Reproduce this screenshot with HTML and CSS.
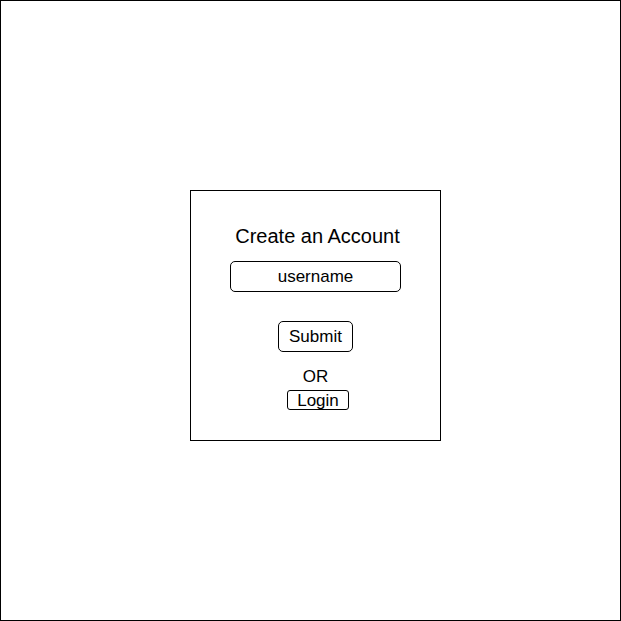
FILE: index.html
```html
<!DOCTYPE html>
<html>
<head>
<meta charset="utf-8">
<link rel="stylesheet" href="styles.css">
</head>
<body>
<div class="frame">
  <div class="card">
    <h1 class="title">Create an Account</h1>
    <div class="input">username</div>
    <button class="btn submit">Submit</button>
    <div class="or">OR</div>
    <button class="btn login">Login</button>
  </div>
</div>
</body>
</html>
```
FILE: styles.css
```css
html, body {
  margin: 0;
  padding: 0;
  background: #fff;
}
body {
  font-family: "Liberation Sans", Arial, sans-serif;
  color: #000;
}
.frame {
  width: 621px;
  height: 621px;
  box-sizing: border-box;
  border: 1px solid #000;
  padding: 189px 0 0 189px;
}
.card {
  width: 251px;
  height: 251px;
  box-sizing: border-box;
  border: 1px solid #000;
  display: flex;
  flex-direction: column;
  align-items: center;
  padding-top: 34px;
}
.title {
  margin: 0;
  font-size: 20px;
  font-weight: normal;
  line-height: 23px;
  padding-left: 4px;
}
.input {
  margin-top: 13px;
  width: 171px;
  height: 31px;
  box-sizing: border-box;
  border: 1px solid #000;
  border-radius: 5px;
  font-size: 17px;
  line-height: 29px;
  text-align: center;
}
.btn {
  font-family: "Liberation Sans", Arial, sans-serif;
  color: #000;
  background: #fff;
  border: 1px solid #000;
  box-sizing: border-box;
  padding: 0;
  font-size: 17px;
}
.submit {
  margin-top: 29px;
  width: 75px;
  height: 31px;
  border-radius: 5px;
  line-height: 29px;
}
.or {
  margin-top: 15px;
  font-size: 17px;
  line-height: 20px;
}
.login {
  margin-top: 3px;
  width: 62px;
  height: 20px;
  border-radius: 3px;
  line-height: 19px;
  margin-left: 5px;
}
```
